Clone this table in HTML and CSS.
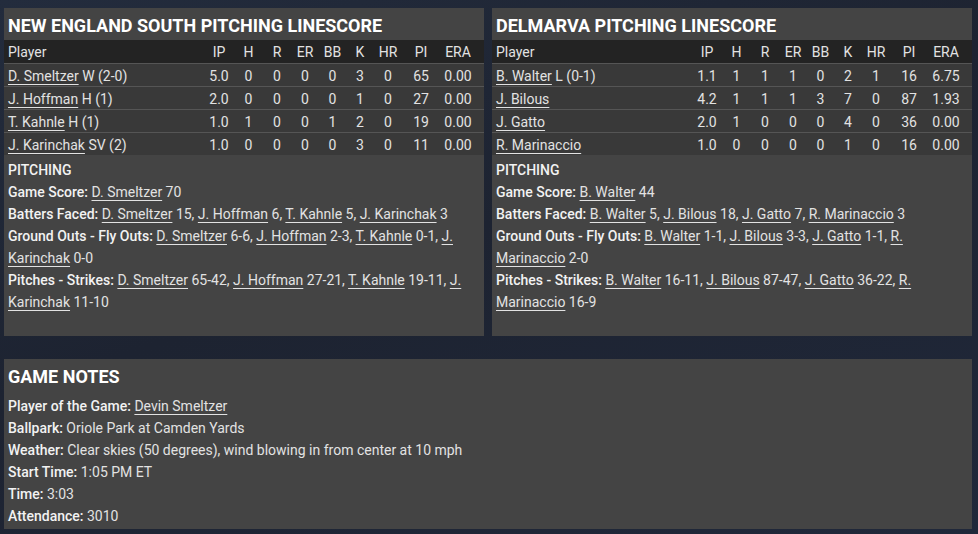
FILE: index.html
```html
<!DOCTYPE html>
<html lang="en">
<head>
    <meta charset="UTF-8">
    <meta name="viewport" content="width=device-width, initial-scale=1.0">
    <title>Pitching Linescore</title>
    <link rel="stylesheet" href="styles.css">
</head>
<body>
    <div class="top">
        <!-- Home team -->
        <div class="panel">
            <h2 class="panel-title">NEW ENGLAND SOUTH PITCHING LINESCORE</h2>
            <table class="linescore">
                <colgroup>
                    <col class="c-player"><col class="c-ip"><col class="c-h"><col class="c-r"><col class="c-er">
                    <col class="c-bb"><col class="c-k"><col class="c-hr"><col class="c-pi"><col class="c-era">
                </colgroup>
                <thead>
                    <tr><th>Player</th><th>IP</th><th>H</th><th>R</th><th>ER</th><th>BB</th><th>K</th><th>HR</th><th>PI</th><th>ERA</th></tr>
                </thead>
                <tbody>
                    <tr><td><a href="#">D. Smeltzer</a> W (2-0)</td><td>5.0</td><td>0</td><td>0</td><td>0</td><td>0</td><td>3</td><td>0</td><td>65</td><td>0.00</td></tr>
                    <tr><td><a href="#">J. Hoffman</a> H (1)</td><td>2.0</td><td>0</td><td>0</td><td>0</td><td>0</td><td>1</td><td>0</td><td>27</td><td>0.00</td></tr>
                    <tr><td><a href="#">T. Kahnle</a> H (1)</td><td>1.0</td><td>1</td><td>0</td><td>0</td><td>1</td><td>2</td><td>0</td><td>19</td><td>0.00</td></tr>
                    <tr><td><a href="#">J. Karinchak</a> SV (2)</td><td>1.0</td><td>0</td><td>0</td><td>0</td><td>0</td><td>3</td><td>0</td><td>11</td><td>0.00</td></tr>
                </tbody>
            </table>
            <div class="notes">
                <p><b>PITCHING</b></p>
                <p><b>Game Score:</b> <a href="#">D. Smeltzer</a> 70</p>
                <p><b>Batters Faced:</b> <a href="#">D. Smeltzer</a> 15, <a href="#">J. Hoffman</a> 6, <a href="#">T. Kahnle</a> 5, <a href="#">J. Karinchak</a> 3</p>
                <p><b>Ground Outs - Fly Outs:</b> <a href="#">D. Smeltzer</a> 6-6, <a href="#">J. Hoffman</a> 2-3, <a href="#">T. Kahnle</a> 0-1, <a href="#">J. Karinchak</a> 0-0</p>
                <p><b>Pitches - Strikes:</b> <a href="#">D. Smeltzer</a> 65-42, <a href="#">J. Hoffman</a> 27-21, <a href="#">T. Kahnle</a> 19-11, <a href="#">J. Karinchak</a> 11-10</p>
            </div>
        </div>

        <!-- Away team -->
        <div class="panel">
            <h2 class="panel-title">DELMARVA PITCHING LINESCORE</h2>
            <table class="linescore">
                <colgroup>
                    <col class="c-player"><col class="c-ip"><col class="c-h"><col class="c-r"><col class="c-er">
                    <col class="c-bb"><col class="c-k"><col class="c-hr"><col class="c-pi"><col class="c-era">
                </colgroup>
                <thead>
                    <tr><th>Player</th><th>IP</th><th>H</th><th>R</th><th>ER</th><th>BB</th><th>K</th><th>HR</th><th>PI</th><th>ERA</th></tr>
                </thead>
                <tbody>
                    <tr><td><a href="#">B. Walter</a> L (0-1)</td><td>1.1</td><td>1</td><td>1</td><td>1</td><td>0</td><td>2</td><td>1</td><td>16</td><td>6.75</td></tr>
                    <tr><td><a href="#">J. Bilous</a></td><td>4.2</td><td>1</td><td>1</td><td>1</td><td>3</td><td>7</td><td>0</td><td>87</td><td>1.93</td></tr>
                    <tr><td><a href="#">J. Gatto</a></td><td>2.0</td><td>1</td><td>0</td><td>0</td><td>0</td><td>4</td><td>0</td><td>36</td><td>0.00</td></tr>
                    <tr><td><a href="#">R. Marinaccio</a></td><td>1.0</td><td>0</td><td>0</td><td>0</td><td>0</td><td>1</td><td>0</td><td>16</td><td>0.00</td></tr>
                </tbody>
            </table>
            <div class="notes">
                <p><b>PITCHING</b></p>
                <p><b>Game Score:</b> <a href="#">B. Walter</a> 44</p>
                <p><b>Batters Faced:</b> <a href="#">B. Walter</a> 5, <a href="#">J. Bilous</a> 18, <a href="#">J. Gatto</a> 7, <a href="#">R. Marinaccio</a> 3</p>
                <p><b>Ground Outs - Fly Outs:</b> <a href="#">B. Walter</a> 1-1, <a href="#">J. Bilous</a> 3-3, <a href="#">J. Gatto</a> 1-1, <a href="#">R. Marinaccio</a> 2-0</p>
                <p><b>Pitches - Strikes:</b> <a href="#">B. Walter</a> 16-11, <a href="#">J. Bilous</a> 87-47, <a href="#">J. Gatto</a> 36-22, <a href="#">R. Marinaccio</a> 16-9</p>
            </div>
        </div>
    </div>

    <!-- Game notes -->
    <div class="panel game-notes">
        <h2 class="panel-title">GAME NOTES</h2>
        <div class="notes">
            <p><b>Player of the Game:</b> <a href="#">Devin Smeltzer</a></p>
            <p><b>Ballpark:</b> Oriole Park at Camden Yards</p>
            <p><b>Weather:</b> Clear skies (50 degrees), wind blowing in from center at 10 mph</p>
            <p><b>Start Time:</b> 1:05 PM ET</p>
            <p><b>Time:</b> 3:03</p>
            <p><b>Attendance:</b> 3010</p>
        </div>
    </div>
</body>
</html>
```

FILE: styles.css
```css
body {
    margin: 0;
    padding: 8px 6px 5px 4px;
    font-family: Roboto, "Noto Sans", sans-serif;
    font-size: 14px;
    color: #e2e2e2;
    background: linear-gradient(160deg, #232c3d 0%, #1d2331 45%, #20283a 100%);
    min-height: 534px;
    box-sizing: border-box;
}
.top {
    display: grid;
    grid-template-columns: 1fr 1fr;
    gap: 8px;
}
.panel {
    background-color: #444;
    height: 328px;
}
.panel-title {
    margin: 0;
    height: 32px;
    line-height: 36px;
    padding-left: 4px;
    font-size: 18px;
    font-weight: 700;
    color: #fff;
    white-space: nowrap;
}
.linescore {
    width: 100%;
    border-collapse: collapse;
    table-layout: fixed;
}
.c-player { width: 200px; }
.c-ip { width: 30px; }
.c-h { width: 29px; }
.c-r, .c-er, .c-k, .c-hr { width: 28px; }
.c-bb { width: 27px; }
.c-pi { width: 38px; }
.c-era { width: 44px; }
.linescore th, .linescore td {
    height: 21px;
    padding: 1px 0 0;
    text-align: center;
    font-weight: 400;
    white-space: nowrap;
}
.linescore th {
    height: 22px;
}
.linescore th:first-child, .linescore td:first-child {
    text-align: left;
    padding-left: 4px;
}
.linescore th:last-child, .linescore td:last-child {
    padding-right: 8px;
}
.linescore thead tr {
    background-color: #232323;
}
.linescore tbody tr {
    background-color: #393939;
    border-top: 1px solid #555;
}
a {
    color: inherit;
    text-decoration: underline;
    text-underline-offset: 3px;
}
.notes {
    padding: 4px 4px 0;
}
.notes p {
    margin: 0;
    line-height: 22px;
}
.notes b {
    font-weight: 500;
    color: #f2f2f2;
}
.game-notes {
    margin-top: 23px;
    height: 170px;
}
```
